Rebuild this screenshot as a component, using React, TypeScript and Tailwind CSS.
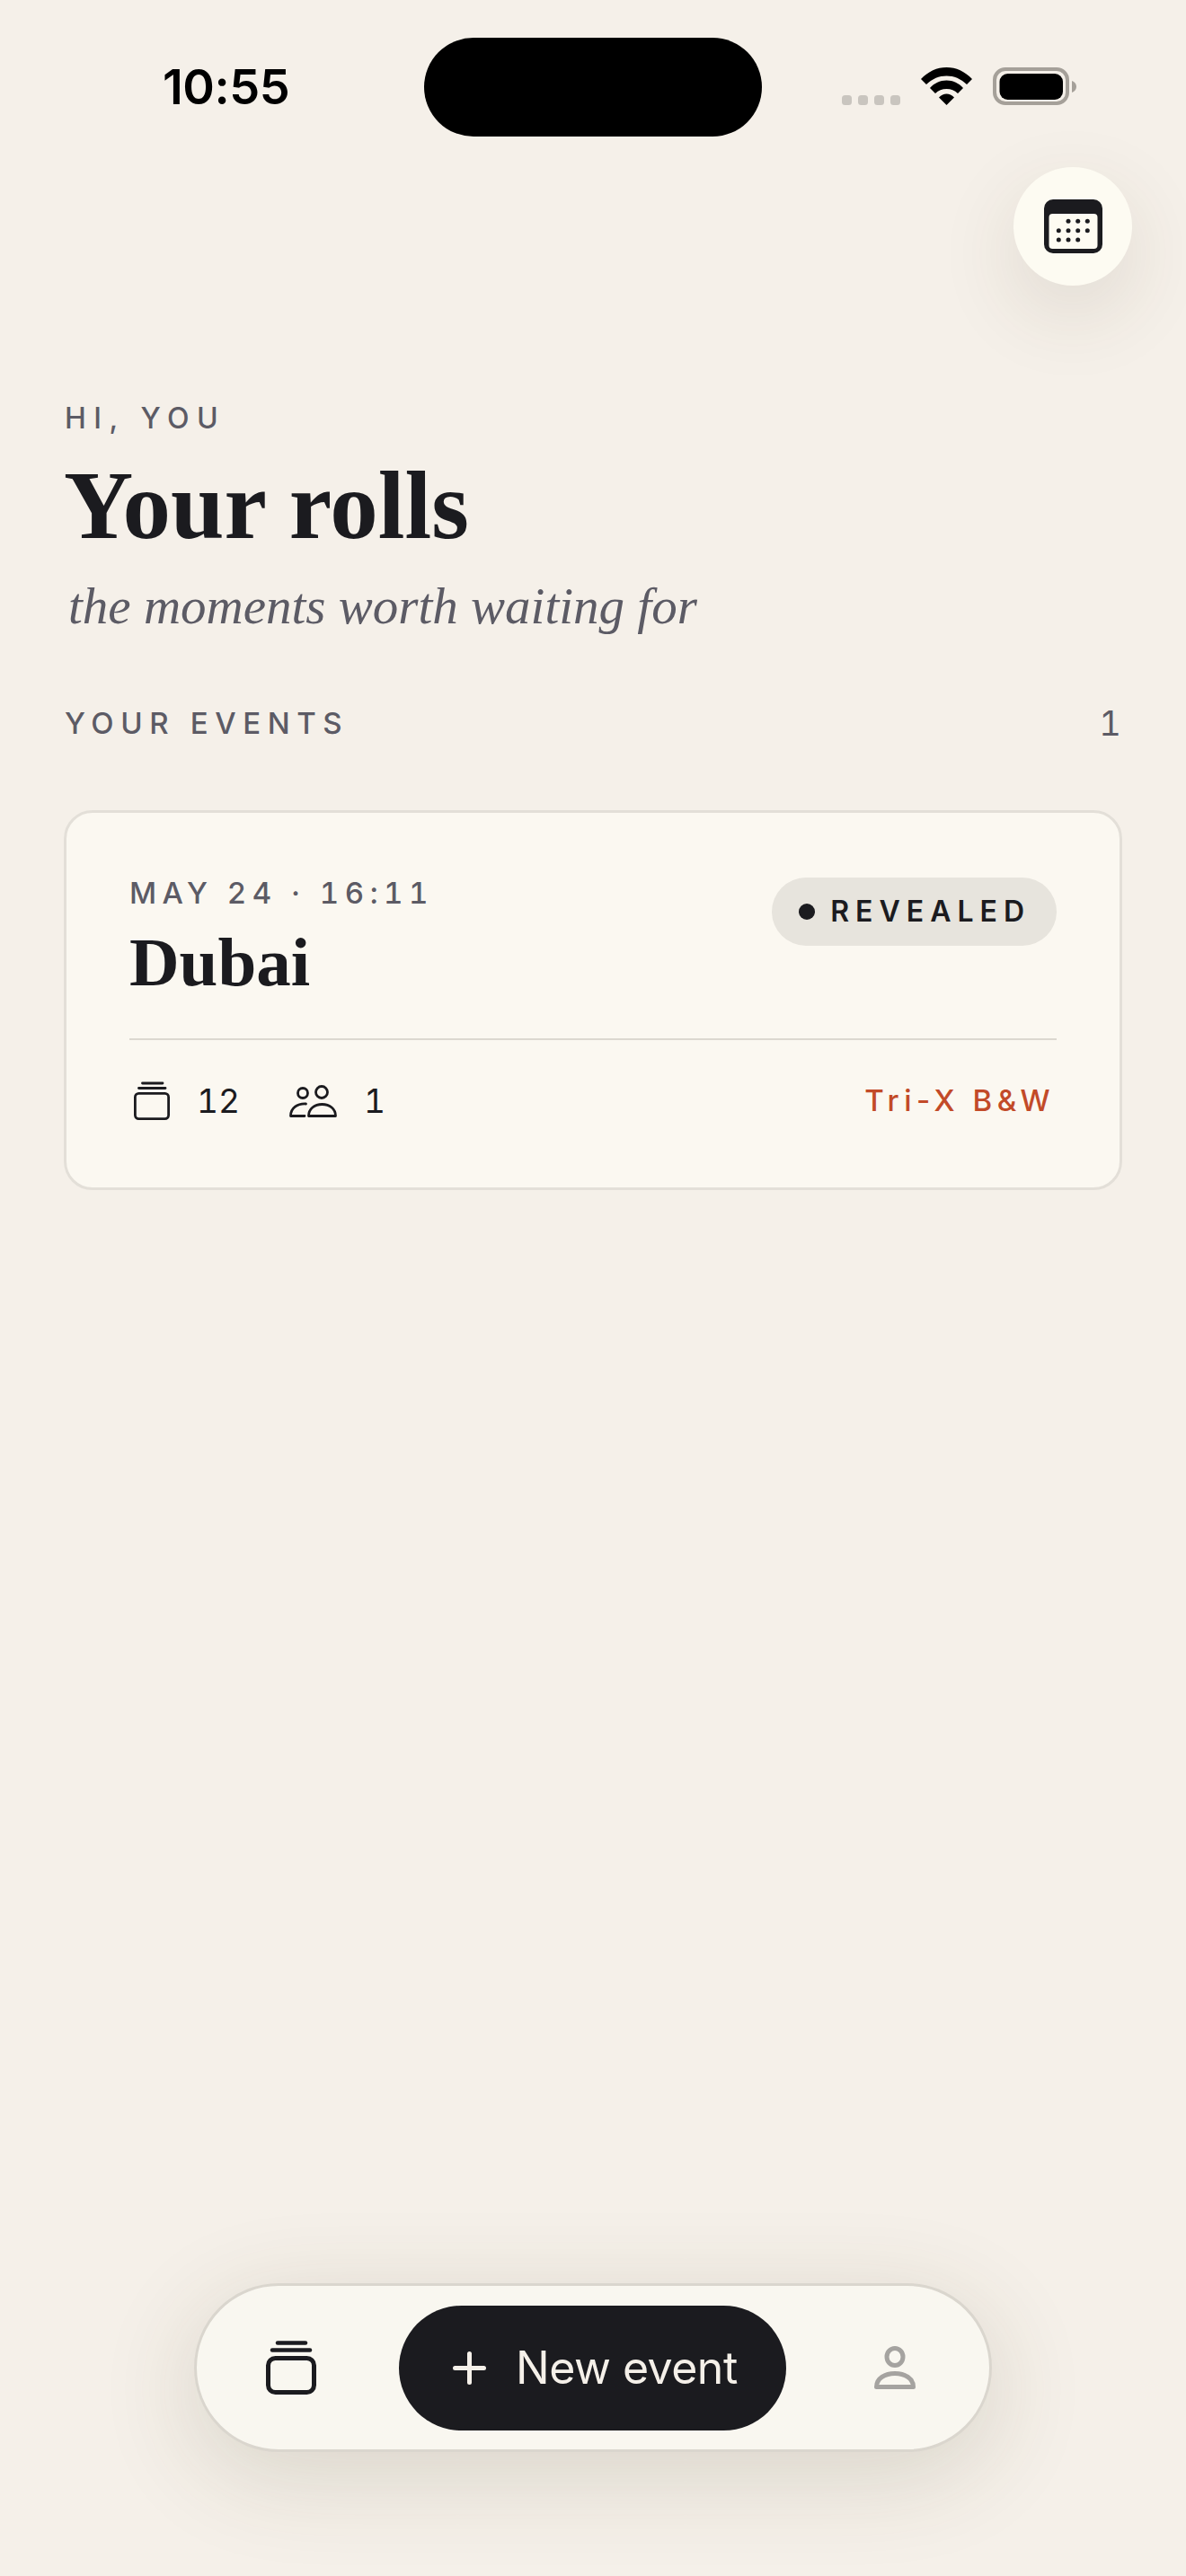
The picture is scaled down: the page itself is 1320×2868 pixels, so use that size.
const SANS = "font-['Inter','Liberation_Sans',sans-serif]";
const SERIF = "font-['Liberation_Serif',serif]";

function StatusIcons() {
  return (
    <svg width="261" height="42" viewBox="0 0 261 42" className="mb-[2px]">
      {[0, 18, 36, 54].map((x) => (
        <rect key={x} x={x} y="31" width="11" height="11" rx="3.5" fill="#c9c5bf" />
      ))}
      <g transform="translate(88 0)">
        <path d="M0 13C8 4.5 18 0 28.5 0S49 4.5 57 13L51 19C44 12.5 37 9.5 28.5 9.5S13 12.5 6 19Z" />
        <path d="M10 23C15 17.5 21 14.5 28.5 14.5S42 17.5 47 23L41 29C37.5 25.5 33.5 24 28.5 24S19.5 25.5 16 29Z" />
        <path d="M20 33.5C22.5 31 25.5 29.5 28.5 29.5S34.5 31 37 33.5L28.5 42Z" />
      </g>
      <rect x="170" y="2" width="81" height="38" rx="12" fill="none" stroke="#a5a099" strokeWidth="4" />
      <rect x="175.5" y="7" width="70.5" height="29" rx="9" />
      <path d="M256 15C259 16 261 18.500 261 21.500S259 27 256 28Z" fill="#a5a099" />
    </svg>
  );
}

function CalendarIcon() {
  const dots = [
    [27, 24.3], [37.7, 24.3], [48.3, 24.3],
    [16.3, 34.700], [27, 34.700], [37.7, 34.700], [48.3, 34.700],
    [16.3, 45], [27, 45], [37.7, 45],
  ];
  return (
    <svg width="65" height="60" viewBox="0 0 65 60">
      <rect width="65" height="60" rx="10" fill="#1b1b1f" />
      <rect x="5.500" y="16" width="54" height="39" rx="4" fill="#fdfbf2" />
      {dots.map(([x, y]) => (
        <circle key={`${x}-${y}`} cx={x} cy={y} r="2.500" fill="#1b1b1f" />
      ))}
    </svg>
  );
}

function StackSmall() {
  return (
    <svg width="40" height="43" viewBox="0 0 40 43" fill="none" stroke="#1b1b1f" strokeWidth="2.800" strokeLinecap="round">
      <rect x="1.400" y="13.400" width="37.200" height="28.200" rx="4" />
      <path d="M5.500 7.500H35" />
      <path d="M9.500 2H32" />
    </svg>
  );
}

function PeopleIcon() {
  return (
    <svg width="53" height="36" viewBox="0 0 53 36" fill="none" stroke="#1b1b1f" strokeWidth="2.800" strokeLinejoin="round" strokeLinecap="round">
      <circle cx="15" cy="9" r="5.500" />
      <circle cx="36" cy="8" r="6.500" />
      <path d="M21.500 34.500C21.500 26.500 28 21.500 36.500 21.500S51.500 26.500 51.500 34.500Z" />
      <path d="M18.500 21C9 20.500 1.500 25.500 1.500 34.500H17" />
    </svg>
  );
}

function StackNav() {
  return (
    <svg width="56" height="60" viewBox="0 0 56 60" fill="none" stroke="#1b1b1f">
      <rect x="2.500" y="19.500" width="51" height="38" rx="8" strokeWidth="5" />
      <path d="M7 10.500H49" strokeWidth="4.500" strokeLinecap="round" />
      <path d="M13 2.500H44" strokeWidth="4.500" strokeLinecap="round" />
    </svg>
  );
}

function PersonIcon() {
  return (
    <svg width="46" height="48" viewBox="0 0 46 48" fill="none" stroke="#a5a3a0" strokeWidth="5" strokeLinejoin="round">
      <ellipse cx="23" cy="12" rx="9" ry="9.500" />
      <path d="M2.500 45.500C2.500 36 12 30.500 23 30.500S43.500 36 43.500 45.500Z" />
    </svg>
  );
}

export default function App() {
  return (
    <div className={`flex h-[2868px] w-[1320px] flex-col overflow-hidden bg-[#f5f0e9] text-[#1b1b1f] ${SANS}`}>
      {/* Status bar */}
      <div className="flex items-center pt-[42px] pl-[181px]">
        <span className="w-[291px] text-[54px] leading-none font-semibold tracking-[-0.5px] text-black">10:55</span>
        <div className="h-[110px] w-[376px] rounded-full bg-black" />
        <div className="ml-[89px]">
          <StatusIcons />
        </div>
      </div>

      <div className="mt-[34px] flex justify-end pr-[60px]">
        <button className="flex h-[132px] w-[132px] items-center justify-center rounded-full bg-[#fdfbf2] shadow-[0_30px_90px_rgba(70,60,30,0.12)]">
          <CalendarIcon />
        </button>
      </div>

      {/* Heading */}
      <div className="mt-[128px] px-[71px]">
        <p className="pl-[1px] text-[32px] leading-[40px] font-medium tracking-[8.500px] text-[#5c5b65]">HI, YOU</p>
        <h1 className={`mt-[17px] text-[107px] leading-[120px] font-bold ${SERIF}`}>Your rolls</h1>
        <p className={`mt-[17px] pl-[5px] text-[57px] leading-[70px] text-[#5c5b65] italic ${SERIF}`}>the moments worth waiting for</p>

        <div className="mt-[75px] flex items-center justify-between">
          <span className="pl-[1px] text-[33px] leading-[40px] font-medium tracking-[7.600px] text-[#5c5b65]">YOUR EVENTS</span>
          <span className="pr-[1px] text-[38px] leading-[40px] text-[#5c5b65] tabular-nums">1</span>
        </div>

        {/* Event card */}
        <div className="mt-[77px] h-[423px] rounded-[32px] border-[3px] border-[#e3dfd8] bg-[#fbf8f1] px-[70px] pt-[71px]">
          <div className="flex h-[182px] items-start justify-between border-b-2 border-[#dcd8d0]">
            <div>
              <p className="text-[33px] leading-[36px] font-medium tracking-[6.500px] text-[#5c5b65] tabular-nums">MAY 24 · 16:11</p>
              <p className={`mt-[14px] text-[77px] leading-[90px] font-bold ${SERIF}`}>Dubai</p>
            </div>
            <div className="mt-[1px] flex h-[76px] items-center gap-[17px] rounded-full bg-[#e7e4dd] pr-[29px] pl-[30px]">
              <span className="h-[18px] w-[18px] rounded-full bg-[#1b1b1f]" />
              <span className="text-[32px] leading-none font-semibold tracking-[7px]">REVEALED</span>
            </div>
          </div>
          <div className="mt-[46px] flex items-center justify-between">
            <div className="flex items-center">
              <span className="ml-[5px]"><StackSmall /></span>
              <span className="ml-[30px] text-[37px] leading-none tabular-nums">12</span>
              <span className="ml-[55px]"><PeopleIcon /></span>
              <span className="ml-[30px] text-[37px] leading-none tabular-nums">1</span>
            </div>
            <span className="pr-[2px] text-[33px] leading-none font-medium tracking-[5.500px] text-[#c24a28]">Tri-X B&amp;W</span>
          </div>
        </div>
      </div>

      {/* Bottom bar */}
      <div className="mt-auto mb-[138px] flex justify-center">
        <div className="flex h-[188px] w-[888px] items-center rounded-full border-[3px] border-[#dad6ce] bg-[#f9f7f0] shadow-[0_24px_110px_rgba(70,60,30,0.16)]">
          <span className="ml-[77px]"><StackNav /></span>
          <button className="ml-[92px] flex h-[139px] w-[431px] items-center rounded-full bg-[#1b1b1f] pl-[60px] text-[#f5f0e9]">
            <svg width="37" height="37" viewBox="0 0 37 37" stroke="#f5f0e9" strokeWidth="5" strokeLinecap="round">
              <path d="M18.500 2.500V34.500M2.500 18.500H34.500" />
            </svg>
            <span className="ml-[33px] text-[50px] leading-none tracking-[-0.5px]">New event</span>
          </button>
          <span className="ml-[98px]"><PersonIcon /></span>
        </div>
      </div>
    </div>
  );
}
